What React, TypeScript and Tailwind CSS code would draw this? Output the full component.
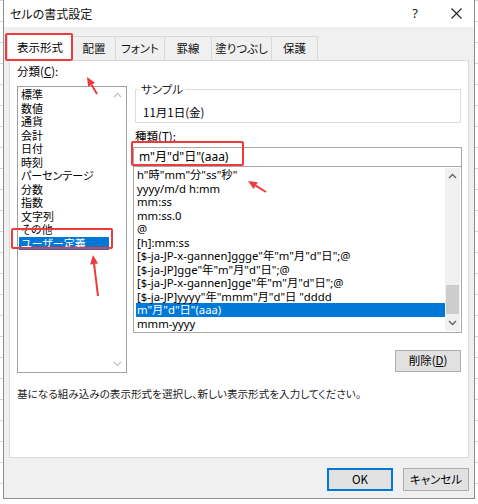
import React from 'react';

const categories = [
  '標準', '数値', '通貨', '会計', '日付', '時刻', 'パーセンテージ',
  '分数', '指数', '文字列', 'その他', 'ユーザー定義',
];

const formats = [
  'h"時"mm"分"ss"秒"',
  'yyyy/m/d h:mm',
  'mm:ss',
  'mm:ss.0',
  '@',
  '[h]:mm:ss',
  '[$-ja-JP-x-gannen]ggge"年"m"月"d"日";@',
  '[$-ja-JP]gge"年"m"月"d"日";@',
  '[$-ja-JP-x-gannen]gge"年"m"月"d"日";@',
  '[$-ja-JP]yyyy"年"mmm"月"d"日 "dddd',
  'm"月"d"日"(aaa)',
  'mmm-yyyy',
];

const tabs = [
  { label: '表示形式', w: 'w-[66px]' },
  { label: '配置', w: 'w-[43px]' },
  { label: 'フォント', w: 'w-[49px]' },
  { label: '罫線', w: 'w-[47px]' },
  { label: '塗りつぶし', w: 'w-[60px]' },
  { label: '保護', w: 'w-[46px]' },
];

function Chevron({ up, color }: { up?: boolean; color: string }) {
  return (
    <svg width="9" height="6" viewBox="0 0 9 6">
      <path
        d={up ? 'M1 5 L4.5 1.5 L8 5' : 'M1 1 L4.5 4.5 L8 1'}
        fill="none"
        stroke={color}
        strokeWidth="1.3"
      />
    </svg>
  );
}

function Arrow({ x1, y1, x2, y2 }: { x1: number; y1: number; x2: number; y2: number }) {
  // tail (x1,y1) -> tip (x2,y2)
  const dx = x2 - x1;
  const dy = y2 - y1;
  const len = Math.hypot(dx, dy);
  const ux = dx / len;
  const uy = dy / len;
  const hl = 9;
  const hw = 4;
  const bx = x2 - ux * hl;
  const by = y2 - uy * hl;
  const p1 = `${bx - uy * hw},${by + ux * hw}`;
  const p2 = `${bx + uy * hw},${by - ux * hw}`;
  return (
    <g>
      <line x1={x1} y1={y1} x2={bx} y2={by} stroke="#ee3a3a" strokeWidth="2" />
      <polygon points={`${x2},${y2} ${p1} ${p2}`} fill="#ee3a3a" />
    </g>
  );
}

const jp = "font-['Noto_Sans_CJK_JP',sans-serif] [font-feature-settings:'palt']";

export default function App() {
  return (
    <div className="relative w-[478px] h-[504px] overflow-hidden bg-white bg-[linear-gradient(#d6d6d6_1px,transparent_1px)] bg-[size:100%_21px] font-['Segoe_UI','Noto_Sans','Noto_Sans_CJK_JP',sans-serif] text-[11.5px] text-black">
      {/* dialog */}
      <div className="ml-[3px] w-[472px] h-[499px] border border-[#8c8c8c] border-t-0 bg-[#f0f0f0] flex flex-col">
        {/* title bar */}
        <div className="h-[27px] bg-white flex items-center pl-[6px] pr-[12px] shrink-0">
          <span className={`${jp} text-[12px] text-[#111]`}>セルの書式設定</span>
          <span className="ml-auto mr-[33px] text-[13px] text-[#222]">?</span>
          <svg width="11" height="11" viewBox="0 0 11 11">
            <path d="M0.5 0.5 L10.5 10.5 M10.5 0.5 L0.5 10.5" stroke="#222" strokeWidth="1.1" />
          </svg>
        </div>

        {/* tabs */}
        <div className={`flex items-end pl-[3px] pt-[6px] h-[33px] shrink-0 ${jp}`}>
          {tabs.map((t, i) =>
            i === 0 ? (
              <div
                key={t.label}
                className={`${t.w} h-[28px] bg-white border border-b-0 border-[#d9d9d9] flex items-center justify-center relative z-10 -mb-px whitespace-nowrap`}
              >
                {t.label}
              </div>
            ) : (
              <div
                key={t.label}
                className={`${t.w} h-[24px] border border-b-0 border-l-0 border-[#d9d9d9] flex items-center justify-center text-[#111] whitespace-nowrap`}
              >
                {t.label}
              </div>
            )
          )}
        </div>

        {/* panel */}
        <div className="ml-[5px] w-[460px] h-[398px] bg-white border border-[#d9d9d9] flex flex-col pl-[7px] shrink-0">
          <div className="flex">
            {/* left column */}
            <div className="w-[110px] flex flex-col">
              <div className={`mt-[3px] h-[14px] leading-[14px] ${jp}`}>
                分類(<span className="underline">C</span>):
              </div>
              <div className={`mt-[8px] h-[287px] border border-[#a0a0a0] flex text-[11px] ${jp}`}>
                <div className="flex-1 pt-[1px] pl-[1px]">
                  {categories.map((c, i) => (
                    <div
                      key={c}
                      className={`h-[13.5px] leading-[13.5px] pl-[2px] whitespace-nowrap ${
                        i === categories.length - 1 ? 'bg-[#0078d7] text-white' : ''
                      }`}
                    >
                      {c}
                    </div>
                  ))}
                </div>
                <div className="w-[17px] flex flex-col items-center justify-between py-[5px]">
                  <Chevron up color="#c4c4c4" />
                  <Chevron color="#c4c4c4" />
                </div>
              </div>
            </div>

            {/* right column */}
            <div className="ml-[6px] w-[329px] flex flex-col">
              <div className="mt-[28px] ml-[2px] w-[326px] h-[34px] border border-[#dcdcdc] relative pt-[14px] pl-[7px]">
                <span className={`absolute -top-[8px] left-[3px] bg-white px-[2px] leading-[14px] text-[#222] ${jp}`}>
                  サンプル
                </span>
                <span className={`leading-[14px] ${jp}`}>11月1日(金)</span>
              </div>
              <div className={`mt-[6px] ml-[2px] h-[14px] leading-[14px] ${jp}`}>
                種類(<span className="underline">T</span>):
              </div>
              <div className="mt-[4px] h-[20px] border border-[#a8a8a8] flex items-center pl-[5px] text-[12px]">
                m"月"d"日"(aaa)
              </div>
              <div className="h-[166px] border border-t-0 border-[#a8a8a8] flex text-[11.3px]">
                <div className="flex-1 pt-[1px] pl-[2px]">
                  {formats.map((f, i) => (
                    <div
                      key={f}
                      className={`h-[13.5px] leading-[13.5px] pl-[1px] whitespace-nowrap ${
                        i === 10 ? 'bg-[#0078d7] text-white' : ''
                      }`}
                    >
                      {f}
                    </div>
                  ))}
                </div>
                <div className="w-[15px] mr-[1px] my-[1px] bg-[#f0f0f0] flex flex-col items-center">
                  <div className="h-[15px] flex items-center justify-center">
                    <Chevron up color="#606060" />
                  </div>
                  <div className="flex-1" />
                  <div className="w-[13px] h-[29px] bg-[#cdcdcd]" />
                  <div className="h-[17px] flex items-center justify-center">
                    <Chevron color="#606060" />
                  </div>
                </div>
              </div>
              <div className={`mt-[17px] self-end mr-[1px] w-[66px] h-[22px] bg-[#e1e1e1] border border-[#adadad] flex items-center justify-center ${jp}`}>
                削除(<span className="underline">D</span>)
              </div>
            </div>
          </div>

          <div className={`mt-[14px] h-[14px] leading-[14px] text-[10.6px] text-[#222] whitespace-nowrap ${jp}`}>
            基になる組み込みの表示形式を選択し、新しい表示形式を入力してください。
          </div>
        </div>

        {/* bottom buttons */}
        <div className={`flex justify-end gap-[10px] pr-[5px] mt-[10px] ${jp}`}>
          <div className="w-[66px] h-[23px] bg-[#e1e1e1] border-2 border-[#0078d7] flex items-center justify-center">
            OK
          </div>
          <div className="w-[66px] h-[23px] bg-[#e1e1e1] border border-[#adadad] flex items-center justify-center">
            キャンセル
          </div>
        </div>
      </div>

      {/* red annotations */}
      <div className="absolute left-[5px] top-[33px] w-[68px] h-[28px] border-2 border-[#ee3a3a] rounded-[2px] z-20" />
      <div className="absolute left-[11px] top-[228px] w-[102px] h-[21px] border-2 border-[#ee3a3a] rounded-[2px]" />
      <div className="absolute left-[131px] top-[141px] w-[113px] h-[25px] border-2 border-[#ee3a3a] rounded-[2px]" />
      <svg className="absolute left-0 top-0 pointer-events-none" width="478" height="504">
        <Arrow x1={97} y1={94} x2={87} y2={77} />
        <Arrow x1={98} y1={296} x2={93} y2={255} />
        <Arrow x1={266} y1={192} x2={248} y2={181} />
      </svg>
    </div>
  );
}
